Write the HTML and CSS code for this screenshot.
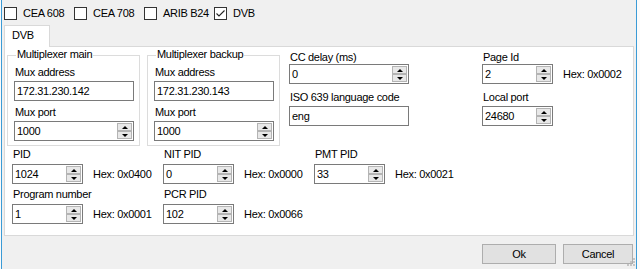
FILE: index.html
```html
<!DOCTYPE html>
<html lang="en">

<head>
    <meta charset="UTF-8">
    <meta name="viewport" content="width=device-width, initial-scale=1.0">
    <title>DVB settings</title>
    <link rel="stylesheet" href="styles.css">
</head>

<body>
    <div class="window">
        <div class="checks">
            <label class="check"><span class="box"></span>CEA 608</label>
            <label class="check"><span class="box"></span>CEA 708</label>
            <label class="check"><span class="box"></span>ARIB B24</label>
            <label class="check">
                <span class="box">
                    <svg width="11" height="11" viewBox="0 0 11 11">
                        <polyline points="1.5,5.5 4,8 9.5,2.5" fill="none" stroke="#222" stroke-width="1.1" />
                    </svg>
                </span>DVB
            </label>
        </div>

        <div class="tabs">
            <div class="tab-strip">
                <div class="tab">DVB</div>
            </div>
            <div class="panel">
                <div class="top-row">
                    <div class="group">
                        <div class="group-title">Multiplexer main</div>
                        <div class="label first">Mux address</div>
                        <div class="textbox wide">172.31.230.142</div>
                        <div class="label">Mux port</div>
                        <div class="spin wide">
                            <span class="value">1000</span>
                            <span class="arrows"><span class="up"></span><span class="down"></span></span>
                        </div>
                    </div>
                    <div class="group">
                        <div class="group-title">Multiplexer backup</div>
                        <div class="label first">Mux address</div>
                        <div class="textbox wide">172.31.230.143</div>
                        <div class="label">Mux port</div>
                        <div class="spin wide">
                            <span class="value">1000</span>
                            <span class="arrows"><span class="up"></span><span class="down"></span></span>
                        </div>
                    </div>
                    <div class="column cc">
                        <div class="label">CC delay (ms)</div>
                        <div class="spin wide">
                            <span class="value">0</span>
                            <span class="arrows"><span class="up"></span><span class="down"></span></span>
                        </div>
                        <div class="label second">ISO 639 language code</div>
                        <div class="textbox wide">eng</div>
                    </div>
                    <div class="column page">
                        <div class="label">Page Id</div>
                        <div class="field">
                            <div class="spin">
                                <span class="value">2</span>
                                <span class="arrows"><span class="up"></span><span class="down"></span></span>
                            </div>
                            <span class="hex">Hex: 0x0002</span>
                        </div>
                        <div class="label second">Local port</div>
                        <div class="field">
                            <div class="spin">
                                <span class="value">24680</span>
                                <span class="arrows"><span class="up"></span><span class="down"></span></span>
                            </div>
                        </div>
                    </div>
                </div>

                <div class="pid-grid">
                    <div class="cell">
                        <div class="label">PID</div>
                        <div class="field">
                            <div class="spin">
                                <span class="value">1024</span>
                                <span class="arrows"><span class="up"></span><span class="down"></span></span>
                            </div>
                            <span class="hex">Hex: 0x0400</span>
                        </div>
                    </div>
                    <div class="cell">
                        <div class="label">NIT PID</div>
                        <div class="field">
                            <div class="spin">
                                <span class="value">0</span>
                                <span class="arrows"><span class="up"></span><span class="down"></span></span>
                            </div>
                            <span class="hex">Hex: 0x0000</span>
                        </div>
                    </div>
                    <div class="cell">
                        <div class="label">PMT PID</div>
                        <div class="field">
                            <div class="spin">
                                <span class="value">33</span>
                                <span class="arrows"><span class="up"></span><span class="down"></span></span>
                            </div>
                            <span class="hex">Hex: 0x0021</span>
                        </div>
                    </div>
                    <div class="cell">
                        <div class="label">Program number</div>
                        <div class="field">
                            <div class="spin">
                                <span class="value">1</span>
                                <span class="arrows"><span class="up"></span><span class="down"></span></span>
                            </div>
                            <span class="hex">Hex: 0x0001</span>
                        </div>
                    </div>
                    <div class="cell">
                        <div class="label">PCR PID</div>
                        <div class="field">
                            <div class="spin">
                                <span class="value">102</span>
                                <span class="arrows"><span class="up"></span><span class="down"></span></span>
                            </div>
                            <span class="hex">Hex: 0x0066</span>
                        </div>
                    </div>
                </div>
            </div>
        </div>

        <div class="buttons">
            <button class="btn ok">Ok</button>
            <button class="btn cancel">Cancel</button>
        </div>

        <!-- size grip in the corner -->
        <svg class="grip" width="12" height="12" viewBox="0 0 12 12">
            <rect x="9" y="1" width="2" height="2" fill="#c4c4c4" />
            <rect x="6" y="4" width="2" height="2" fill="#c4c4c4" />
            <rect x="9" y="4" width="2" height="2" fill="#c4c4c4" />
            <rect x="3" y="7" width="2" height="2" fill="#c4c4c4" />
            <rect x="6" y="7" width="2" height="2" fill="#c4c4c4" />
            <rect x="9" y="7" width="2" height="2" fill="#c4c4c4" />
        </svg>
    </div>
</body>

</html>
```

FILE: styles.css
```css
* {
    margin: 0;
    padding: 0;
}

body {
    background: #fbfbfb;
    font-family: "Liberation Sans", Arial, sans-serif;
    font-size: 11px;
    letter-spacing: -0.3px;
    color: #000;
}

.window {
    position: relative;
    box-sizing: border-box;
    width: 636px;
    height: 269px;
    margin-left: 1px;
    border-left: 1px solid #3b9bd6;
    border-right: 1px solid #3b9bd6;
    background: #f0f0f0;
}

/* top checkboxes */
.checks {
    display: flex;
    height: 13px;
    padding: 7px 0 0 2px;
}

.check {
    width: 70px;
    display: flex;
    align-items: center;
    gap: 6px;
    line-height: 13px;
}

.box {
    width: 13px;
    height: 13px;
    box-sizing: border-box;
    border: 1px solid #333;
    background: #fff;
    display: flex;
}

/* tab control */
.tabs {
    margin: 5px 2px 0 2px;
}

.tab-strip {
    display: flex;
    height: 21px;
}

.tab {
    position: relative;
    z-index: 1;
    width: 46px;
    height: 22px;
    box-sizing: border-box;
    border: 1px solid #d9d9d9;
    border-bottom: none;
    background: #fff;
    padding-left: 7px;
    line-height: 19px;
}

.panel {
    height: 190px;
    box-sizing: border-box;
    border: 1px solid #d9d9d9;
    background: #fff;
}

.top-row {
    display: flex;
    align-items: flex-start;
    padding-left: 2px;
}

.group {
    width: 133px;
    box-sizing: border-box;
    margin-top: 8px;
    border: 1px solid #dcdcdc;
    padding: 0 5px 4px 6px;
}

.group + .group {
    margin-left: 7px;
}

.group-title {
    display: table;
    margin: -8px 0 0 2px;
    padding: 0 1px;
    background: #fff;
    line-height: 13px;
}

.label {
    line-height: 13px;
    padding-left: 1px;
    margin-top: 5px;
    white-space: nowrap;
}

.label + .textbox,
.label + .spin,
.label + .field {
    margin-top: 2px;
}

.column {
    margin-top: 4px;
}

.column .label {
    margin-top: 0;
}

.column .label + .spin,
.column .label + .field {
    margin-top: 0;
}

.column .label.second {
    margin-top: 7px;
}

.column .label.second + .field {
    margin-top: 2px;
}

.cc {
    width: 120px;
    margin-left: 9px;
}

.page {
    margin-left: 73px;
}

/* inputs */
.textbox,
.spin {
    width: 71px;
    height: 20px;
    box-sizing: border-box;
    border: 1px solid #7a7a7a;
    background: #fff;
}

.textbox {
    padding-left: 2px;
    line-height: 18px;
}

.wide {
    width: 120px;
}

.spin {
    display: flex;
}

.value {
    flex: 1;
    padding-left: 2px;
    line-height: 18px;
}

.arrows {
    width: 15px;
    display: flex;
    flex-direction: column;
    padding: 1px 1px 1px 0;
}

.up,
.down {
    flex: 1;
    box-sizing: border-box;
    border: 1px solid #b4b4b4;
    background: #e8e8e8;
    display: flex;
    justify-content: center;
    align-items: center;
}

.up::after,
.down::after {
    content: "";
    width: 0;
    height: 0;
    border-left: 3px solid transparent;
    border-right: 3px solid transparent;
}

.up::after {
    border-bottom: 3px solid #000;
}

.down::after {
    border-top: 3px solid #000;
}

.field {
    display: flex;
    align-items: center;
}

.hex {
    margin-left: 10px;
    white-space: nowrap;
}

/* pid rows */
.pid-grid {
    display: grid;
    grid-template-columns: repeat(3, 151px);
    row-gap: 4px;
    margin-top: 2px;
    padding-left: 7px;
}

.pid-grid .label {
    margin-top: 0;
}

.pid-grid .label + .field {
    margin-top: 3px;
}

/* dialog buttons */
.buttons {
    display: flex;
    justify-content: flex-end;
    gap: 7px;
    margin: 8px 3px 0 0;
}

.btn {
    height: 20px;
    box-sizing: border-box;
    border: 1px solid #adadad;
    background: #e1e1e1;
    font: inherit;
    letter-spacing: inherit;
    color: #000;
    line-height: 18px;
}

.ok {
    width: 74px;
}

.cancel {
    width: 70px;
}

.grip {
    position: absolute;
    right: 0;
    bottom: 0;
}
```
